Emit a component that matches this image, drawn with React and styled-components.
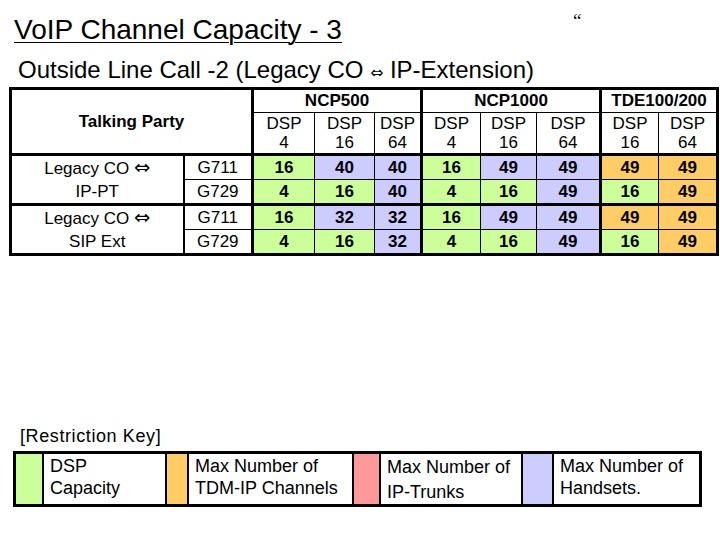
import styled, { createGlobalStyle } from 'styled-components';

const GlobalStyle = createGlobalStyle`
	body {
		margin: 0;
		background: #ffffff;
		color: #000000;
		font-family: "Liberation Sans", Arial, "DejaVu Sans", sans-serif;
	}
`;

const COLORS = {
	g: '#ccff99',
	l: '#ccccff',
	o: '#ffcc66',
	p: '#ff9999',
};

const ARROW = '\u21D4';

const GROUPS = [
	{
		name: ['Legacy CO', 'IP-PT'],
		rows: [
			{ codec: 'G711', values: [16, 40, 40, 16, 49, 49, 49, 49], colors: 'gllglloo' },
			{ codec: 'G729', values: [4, 16, 40, 4, 16, 49, 16, 49], colors: 'gglgglgo' },
		],
	},
	{
		name: ['Legacy CO', 'SIP Ext'],
		rows: [
			{ codec: 'G711', values: [16, 32, 32, 16, 49, 49, 49, 49], colors: 'gllglloo' },
			{ codec: 'G729', values: [4, 16, 32, 4, 16, 49, 16, 49], colors: 'gglgglgo' },
		],
	},
];

const MODELS = [
	{ name: 'NCP500', dsp: [4, 16, 64] },
	{ name: 'NCP1000', dsp: [4, 16, 64] },
	{ name: 'TDE100/200', dsp: [16, 64] },
];

const COL_WIDTHS = [173, 69, 62, 60, 47, 59, 56, 64, 58, 59];
const GROUP_STARTS = [0, 3, 6];

const KEY = [
	{ color: 'g', swatch: 26, width: 123, lines: ['DSP', 'Capacity'] },
	{ color: 'o', swatch: 20, width: 165, lines: ['Max Number of', 'TDM-IP Channels'] },
	{ color: 'p', swatch: 25, width: 142, lines: ['Max Number of', 'IP-Trunks'], lineHeight: 25 },
	{ color: 'l', swatch: 29, lines: ['Max Number of', 'Handsets.'] },
];

const Page = styled.div`
	width: 720px;
	height: 540px;
	overflow: hidden;
`;

const TitleRow = styled.div`
	display: grid;
	grid-template-columns: 559px auto;
	padding: 14px 0 0 14px;
`;

const Title = styled.h1`
	margin: 0;
	font-size: 28px;
	font-weight: normal;
	line-height: 32px;
	text-decoration: underline;
	text-underline-offset: 3px;
	text-decoration-thickness: 1px;
`;

const Quote = styled.span`
	font-family: "Liberation Serif", "Times New Roman", serif;
	font-size: 19px;
	line-height: 19px;
	margin-top: -3px;
`;

const Subtitle = styled.h2`
	margin: 10px 0 0 18px;
	font-size: 24px;
	font-weight: normal;
	line-height: 28px;
`;

const Arrow = styled.span`
	font-family: "DejaVu Sans", sans-serif;
	font-size: ${({ $size }) => $size || 1}em;
	line-height: 1;
`;

const Table = styled.table`
	margin: 3px 0 0 9px;
	width: 707px;
	border-collapse: collapse;
	table-layout: fixed;
	border: 3px solid #000;
	font-size: 17px;
`;

const Row = styled.tr`
	height: ${({ $h }) => $h}px;
`;

const Cell = styled.td`
	padding: 0;
	border: 1px solid #000;
	text-align: center;
	vertical-align: middle;
	line-height: ${({ $lh }) => $lh || 20}px;
	font-weight: ${({ $bold }) => ($bold ? 'bold' : 'normal')};
	background: ${({ $bg }) => ($bg ? COLORS[$bg] : '#ffffff')};
	${({ $thickLeft }) => $thickLeft && 'border-left-width: 3px;'}
	${({ $thickRight }) => $thickRight && 'border-right-width: 3px;'}
	${({ $thickTop }) => $thickTop && 'border-top-width: 3px;'}
	${({ $midRight }) => $midRight && 'border-right-width: 2px;'}
`;

const KeyHeading = styled.div`
	margin: 169px 0 0 20px;
	font-size: 18px;
	line-height: 22px;
	letter-spacing: 0.6px;
`;

const KeyBox = styled.div`
	display: flex;
	box-sizing: border-box;
	width: 689px;
	height: 56px;
	margin: 4px 0 0 13px;
	border: 3px solid #000;
`;

const Swatch = styled.div`
	flex: none;
	width: ${({ $w }) => $w}px;
	background: ${({ $color }) => COLORS[$color]};
	border-right: 2px solid #000;
`;

const KeyLabel = styled.div`
	box-sizing: border-box;
	flex: ${({ $w }) => ($w ? 'none' : '1')};
	width: ${({ $w }) => ($w ? `${$w}px` : 'auto')};
	padding: 1px 0 0 6px;
	font-size: 18px;
	line-height: ${({ $lh }) => $lh || 22}px;
	${({ $w }) => $w && 'border-right: 2px solid #000;'}
`;

const Lines = ({ lines }) =>
	lines.map((line, i) => (
		<span key={i}>
			{line}
			{i < lines.length - 1 && <br />}
		</span>
	));

const KeyPart = ({ item }) => (
	<>
		<Swatch $color={item.color} $w={item.swatch} />
		<KeyLabel $w={item.width} $lh={item.lineHeight}>
			<Lines lines={item.lines} />
		</KeyLabel>
	</>
);

export default function App() {
	return (
		<Page>
			<GlobalStyle />
			<TitleRow>
				<Title>VoIP Channel Capacity - 3</Title>
				<Quote>{'\u201C'}</Quote>
			</TitleRow>
			<Subtitle>
				Outside Line Call -2 (Legacy CO <Arrow $size={0.65}>{ARROW}</Arrow> IP-Extension)
			</Subtitle>

			<Table>
				<colgroup>
					{COL_WIDTHS.map((w, i) => (
						<col key={i} style={{ width: w }} />
					))}
				</colgroup>
				<thead>
					<Row $h={24}>
						<Cell as="th" colSpan={2} rowSpan={2} $bold $thickRight>
							Talking Party
						</Cell>
						{MODELS.map((m) => (
							<Cell as="th" key={m.name} colSpan={m.dsp.length} $bold $thickLeft>
								{m.name}
							</Cell>
						))}
					</Row>
					<Row $h={42}>
						{MODELS.flatMap((m) =>
							m.dsp.map((d, i) => (
								<Cell as="th" key={`${m.name}-${d}`} $thickLeft={i === 0} $lh={19}>
									DSP
									<br />
									{d}
								</Cell>
							))
						)}
					</Row>
				</thead>
				<tbody>
					{GROUPS.map((group, gi) =>
						group.rows.map((row, ri) => (
							<Row key={`${gi}-${ri}`} $h={25}>
								{ri === 0 && (
									<Cell rowSpan={2} $thickTop $midRight $lh={23}>
										{group.name[0]} <Arrow $size={1.15}>{ARROW}</Arrow>
										<br />
										{group.name[1]}
									</Cell>
								)}
								<Cell $thickTop={ri === 0} $thickRight $lh={18}>
									{row.codec}
								</Cell>
								{row.values.map((v, ci) => (
									<Cell
										key={ci}
										$bold
										$lh={18}
										$bg={row.colors[ci]}
										$thickTop={ri === 0}
										$thickLeft={GROUP_STARTS.includes(ci)}
									>
										{v}
									</Cell>
								))}
							</Row>
						))
					)}
				</tbody>
			</Table>

			<KeyHeading>[Restriction Key]</KeyHeading>
			<KeyBox>
				{KEY.map((k) => (
					<KeyPart key={k.color} item={k} />
				))}
			</KeyBox>
		</Page>
	);
}
